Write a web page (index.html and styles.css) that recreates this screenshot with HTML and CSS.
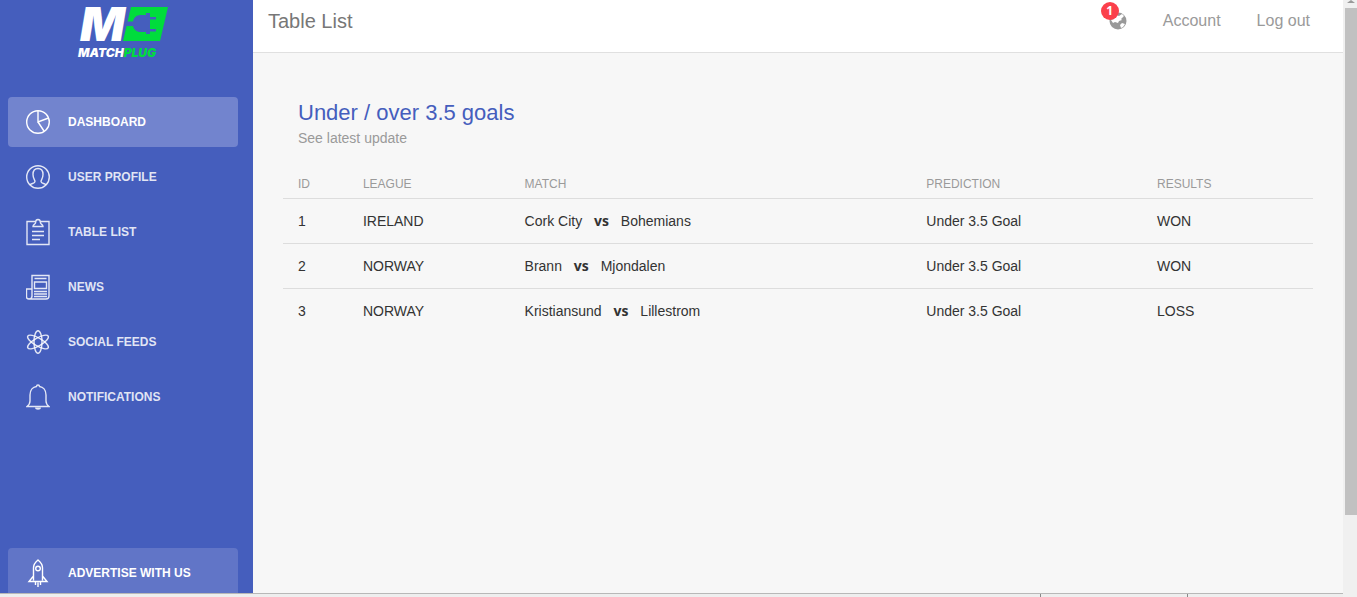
FILE: index.html
```
<!DOCTYPE html>
<html lang="en">
  <head>
    <meta charset="UTF-8" />
    <meta name="viewport" content="width=device-width, initial-scale=1.0" />
    <title>MatchPlug - Table List</title>
    <link rel="stylesheet" href="styles.css">
  </head>
  <body>
    <div class="viewport">
      <div class="wrapper">
        <!-- Sidebar -->
        <aside class="sidebar">
          <a href="#" class="logo" aria-label="MatchPlug">
            <svg width="94" height="56" viewBox="0 0 94 56">
              <text class="logo-mark" x="2" y="36">M</text>
              <path fill="#00dc3c" d="M53 2H90L82 36H45z" />
              <path fill="#455ebd" d="M49 16.500H55C56 12 59 10 63 10H68V8H72V12H78V14.500H72V24H78V26.500H72V29H68V27H63C59 27 56 25 55 21H48z" />
              <text class="logo-name" x="0" y="52">MATCH<tspan class="green">PLUG</tspan></text>
            </svg>
          </a>
          <nav class="nav">
            <a href="#" class="nav-item active">
              <svg class="icon" viewBox="0 0 24 28">
                <circle cx="12" cy="14" r="11.3" />
                <path d="M12 3v11l10.5-4M12 14l6 9" />
              </svg>
              Dashboard
            </a>
            <a href="#" class="nav-item">
              <svg class="icon" viewBox="0 0 24 28">
                <circle cx="12" cy="14" r="11.3" />
                <path d="M4 22c1-2 5-1 5-3.500 0-1.500-2-3-2-7 0-4 2-6 5-6s5 2 5 6c0 4-2 5.500-2 7 0 2.500 4 1.500 5 3.500" />
              </svg>
              User Profile
            </a>
            <a href="#" class="nav-item">
              <svg class="icon" viewBox="0 0 24 28">
                <path d="M9 3.500H1v23h22v-23h-8M7 8.500h10c0-2-2-2-2.500-3.500C14.500 3 14 1.500 12 1.500S9.500 3 9.500 5C9 6.500 7 6.500 7 8.500zM6 13.500h12M6 17.500h12M6 21.500h8" />
              </svg>
              Table List
            </a>
            <a href="#" class="nav-item">
              <svg class="icon" viewBox="0 0 24 28">
                <path d="M6 24V2.500h17V23c0 2-1 3-3 3H3c-2 0-2.500-1-2.500-2.500V16H6M6 23c0 2-1 3-3 3M8.500 5.500h12M8.500 9h12v6.500h-12zM8 18.500h13M8 21h13M8 23.500h13" />
              </svg>
              News
            </a>
            <a href="#" class="nav-item">
              <svg class="icon" viewBox="0 0 24 28">
                <ellipse cx="12" cy="14" rx="4" ry="11.300" />
                <ellipse cx="12" cy="14" rx="4" ry="11.800" transform="rotate(60 12 14)" />
                <ellipse cx="12" cy="14" rx="4" ry="11.800" transform="rotate(-60 12 14)" />
              </svg>
              Social Feeds
            </a>
            <a href="#" class="nav-item">
              <svg class="icon" viewBox="0 0 24 28">
                <path d="M10.500 3.500c0-2 3-2 3 0C17 4 20 7 20 12v6c0 3 1 4 3 5.500H1C3 22 4 21 4 18v-6c0-5 3-8 6.500-8.500z" />
                <path class="solid" d="M9 24.500h6c0 3-6 3-6 0z" />
              </svg>
              Notifications
            </a>
            <a href="#" class="nav-item nav-ad">
              <svg class="icon" viewBox="0 0 24 28">
                <path d="M7.500 21.500V9c0-3 2-6 4.500-8 2.500 2 4.500 5 4.500 8v12.500M7.500 17L3 22.500h18L16.500 17M9.500 23V26M12 23.500V28M14.500 23V26" />
                <circle cx="12" cy="9.500" r="2.300" />
              </svg>
              Advertise with us
            </a>
          </nav>
        </aside>

        <!-- Main panel -->
        <div class="main">
          <header class="topbar">
            <h1 class="brand">Table List</h1>
            <div class="top-links">
              <a href="#" class="globe" aria-label="Notifications">
                <svg width="18" height="18" viewBox="0 0 18 18">
                  <circle cx="9" cy="9" r="8.500" fill="#999" />
                  <path fill="#fff" d="M7 3l3 1 3-2 2 2-3 3 1 1-3 1-1 2-3-1-2 1-2-3 3-1zM11 13l2-2 3 1-2 3-2 1z" />
                </svg>
                <span class="badge">1</span>
              </a>
              <a href="#">Account</a>
              <a href="#">Log out</a>
            </div>
          </header>

          <main class="content">
            <div class="card-header">
              <h2 class="title">Under / over 3.5 goals</h2>
              <p class="category">See latest update</p>
            </div>
            <table class="table">
              <thead>
                <tr>
                  <th class="col-id">ID</th>
                  <th class="col-league">League</th>
                  <th class="col-match">Match</th>
                  <th class="col-prediction">Prediction</th>
                  <th>Results</th>
                </tr>
              </thead>
              <tbody>
                <tr>
                  <td>1</td>
                  <td>IRELAND</td>
                  <td>Cork City <b>vs</b> Bohemians</td>
                  <td>Under 3.5 Goal</td>
                  <td>WON</td>
                </tr>
                <tr>
                  <td>2</td>
                  <td>NORWAY</td>
                  <td>Brann <b>vs</b> Mjondalen</td>
                  <td>Under 3.5 Goal</td>
                  <td>WON</td>
                </tr>
                <tr>
                  <td>3</td>
                  <td>NORWAY</td>
                  <td>Kristiansund <b>vs</b> Lillestrom</td>
                  <td>Under 3.5 Goal</td>
                  <td>LOSS</td>
                </tr>
              </tbody>
            </table>
          </main>
        </div>
      </div>
      <div class="bottom-strip">
        <span class="strip-tab"></span>
        <span class="strip-end"></span>
      </div>
    </div>

    <div class="scrollbar">
      <span class="scroll-arrow"></span>
      <span class="scroll-thumb"></span>
    </div>
  </body>
</html>
```
FILE: styles.css
```
:root {
  --blue: #455ebd;
  --green: #00dc3c;
  --grey: #9a9a9a;
  --text-color: #333;
  --bg-color: #f7f7f7;
}

* {
  margin: 0;
  padding: 0;
  box-sizing: border-box;
}

body {
  height: 100vh;
  display: flex;
  overflow: hidden;
  background-color: var(--bg-color);
  color: var(--text-color);
  font-family: "Liberation Sans", Arial, sans-serif;
  font-size: 14px;
  line-height: 20px;
}

a {
  color: inherit;
  text-decoration: none;
}

.viewport {
  flex: 1;
  display: flex;
  flex-direction: column;
  min-width: 0;
}

.wrapper {
  flex: 1;
  display: flex;
  min-height: 0;
}

/* Sidebar */
.sidebar {
  width: 253px;
  flex-shrink: 0;
  display: flex;
  flex-direction: column;
  overflow: hidden;
  background-color: var(--blue);
  color: #fff;
}

.logo {
  padding: 5px 0 0 78px;
  height: 97px;
  flex-shrink: 0;
}

.logo svg {
  overflow: visible;
}

.logo-mark,
.logo-name {
  font-family: Inter, sans-serif;
  font-weight: 900;
  font-style: italic;
  fill: #fff;
}

.logo-mark {
  font-size: 47px;
}

.logo-name {
  font-size: 12px;
}

.logo-name .green {
  fill: var(--green);
}

.nav {
  flex: 1;
  display: flex;
  flex-direction: column;
  gap: 5px;
  padding: 0 15px 0 8px;
}

.nav-item {
  display: flex;
  align-items: center;
  gap: 18px;
  height: 50px;
  flex-shrink: 0;
  padding: 0 18px;
  border-radius: 4px;
  color: rgba(255, 255, 255, 0.85);
  font-size: 12px;
  font-weight: bold;
  text-transform: uppercase;
}

.nav-item.active {
  background-color: #7284ce;
  color: #fff;
}

.nav-item.nav-ad {
  margin-top: auto;
  margin-bottom: -5px;
  background-color: #6175c7;
  color: #fff;
}

.icon {
  width: 24px;
  height: 28px;
  fill: none;
  stroke: currentColor;
  stroke-width: 1.4;
}

.icon .solid {
  fill: currentColor;
  stroke: none;
}

/* Main panel */
.main {
  flex: 1;
  min-width: 0;
}

.topbar {
  display: flex;
  justify-content: space-between;
  align-items: center;
  height: 53px;
  padding: 0 33px 10px 15px;
  background-color: #fff;
  border-bottom: 1px solid #e0e0e0;
}

.brand {
  font-size: 20px;
  font-weight: normal;
  color: #777;
}

.top-links {
  display: flex;
  align-items: center;
  gap: 36px;
  font-size: 16px;
  color: var(--grey);
}

.globe {
  position: relative;
  display: flex;
}

.badge {
  position: absolute;
  top: -10px;
  left: -8px;
  width: 18px;
  height: 18px;
  border-radius: 50%;
  background-color: #fb404b;
  color: #fff;
  font: bold 12px/18px "Open Sans", sans-serif;
  text-align: center;
}

.content {
  padding: 45px 30px;
}

.card-header {
  padding: 0 15px;
}

.title {
  font-size: 22px;
  font-weight: normal;
  line-height: 30px;
  color: var(--blue);
}

.category {
  color: var(--grey);
}

.table {
  width: 100%;
  margin-top: 21px;
  table-layout: fixed;
  border-collapse: collapse;
}

.table th,
.table td {
  padding: 12px 15px;
  text-align: left;
}

.table th {
  padding: 5px 15px 4px;
  font-size: 12px;
  font-weight: normal;
  text-transform: uppercase;
  color: var(--grey);
}

.table td {
  border-top: 1px solid #ddd;
}

.table b {
  margin: 0 8px;
  font-family: "Open Sans", sans-serif;
}

.col-id { width: 6.3%; }
.col-league { width: 15.7%; }
.col-match { width: 39%; }
.col-prediction { width: 22.4%; }

/* Strip under the page */
.bottom-strip {
  display: flex;
  justify-content: flex-end;
  height: 4px;
  border-top: 1px solid #b8b8b8;
  background-color: #eee;
}

.strip-tab {
  width: 148px;
  border: solid #888;
  border-width: 0 1px;
}

.strip-end {
  width: 155px;
}

/* Scrollbar */
.scrollbar {
  width: 14px;
  display: flex;
  flex-direction: column;
  align-items: flex-end;
  background-color: #f0f0f0;
}

.scroll-arrow {
  margin: 0 2px 5px 0;
  border: 4px solid transparent;
  border-top: 0;
  border-bottom: 3px solid #999;
}

.scroll-thumb {
  width: 12px;
  height: 85%;
  background-color: #c1c1c1;
}
```
